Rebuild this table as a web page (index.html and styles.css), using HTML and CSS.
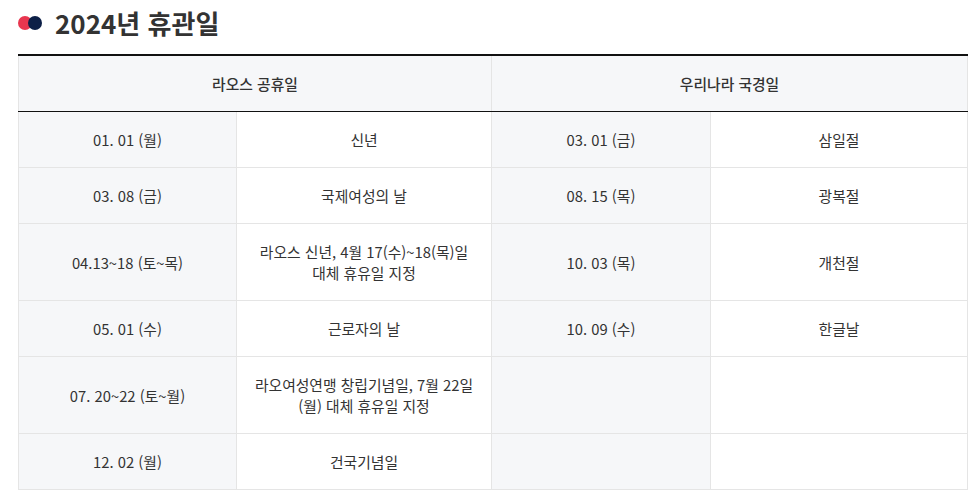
FILE: index.html
```html
<!DOCTYPE html>
<html lang="ko">
<head>
<meta charset="utf-8">
<title>2024년 휴관일</title>
<link rel="stylesheet" href="styles.css">
</head>
<body>
<div class="page">
  <h2 class="title">
    <span class="dots"><span class="dot red"></span><span class="dot navy"></span></span>
    2024년 휴관일
  </h2>
  <table class="holidays">
    <colgroup>
      <col class="c-date"><col class="c-name"><col class="c-date2"><col class="c-name2">
    </colgroup>
    <thead>
      <tr><th colspan="2">라오스 공휴일</th><th colspan="2">우리나라 국경일</th></tr>
    </thead>
    <tbody>
      <tr><td class="date">01. 01 (월)</td><td>신년</td><td class="date">03. 01 (금)</td><td>삼일절</td></tr>
      <tr><td class="date">03. 08 (금)</td><td>국제여성의 날</td><td class="date">08. 15 (목)</td><td>광복절</td></tr>
      <tr><td class="date">04.13~18 (토~목)</td><td>라오스 신년, 4월 17(수)~18(목)일<br>대체 휴유일 지정</td><td class="date">10. 03 (목)</td><td>개천절</td></tr>
      <tr><td class="date">05. 01 (수)</td><td>근로자의 날</td><td class="date">10. 09 (수)</td><td>한글날</td></tr>
      <tr><td class="date">07. 20~22 (토~월)</td><td>라오여성연맹 창립기념일, 7월 22일<br>(월) 대체 휴유일 지정</td><td class="date"></td><td></td></tr>
      <tr><td class="date">12. 02 (월)</td><td>건국기념일</td><td class="date"></td><td></td></tr>
    </tbody>
  </table>
</div>
</body>
</html>
```
FILE: styles.css
```css
html, body {
  margin: 0;
  padding: 0;
  background: #fff;
}
body {
  font-family: "Noto Sans CJK KR", "Noto Sans", sans-serif;
  color: #333;
}
.page {
  padding: 0 9px 0 18px;
}
.title {
  display: flex;
  align-items: center;
  margin: 0;
  height: 44px;
  font-size: 26px;
  font-weight: 700;
  color: #333;
}
.dots {
  display: inline-flex;
  margin-right: 13px;
  margin-top: 1px;
}
.dot {
  width: 14px;
  height: 14px;
  border-radius: 50%;
}
.dot.red { background: #e8364f; }
.dot.navy { background: #0c1f47; margin-left: -4px; }
.holidays {
  width: 949px;
  margin-top: 10px;
  border-collapse: collapse;
  border-top: 2px solid #111;
  table-layout: fixed;
  font-size: 14.8px;
  line-height: 21px;
}
.c-date { width: 218px; }
.c-name { width: 255px; }
.c-date2 { width: 219px; }
.c-name2 { width: 257px; }
.holidays th {
  height: 21px;
  padding: 17px 10px;
  background: #f6f7f9;
  border-left: 1px solid #e5e5e5;
  border-right: 1px solid #e5e5e5;
  border-bottom: 1px solid #111;
  font-weight: 500;
  color: #333;
}
.holidays td {
  height: 21px;
  padding: 17px 16px;
  border: 1px solid #e5e5e5;
  text-align: center;
  background: #fff;
}
.holidays td.date {
  background: #f6f7f9;
}
```
